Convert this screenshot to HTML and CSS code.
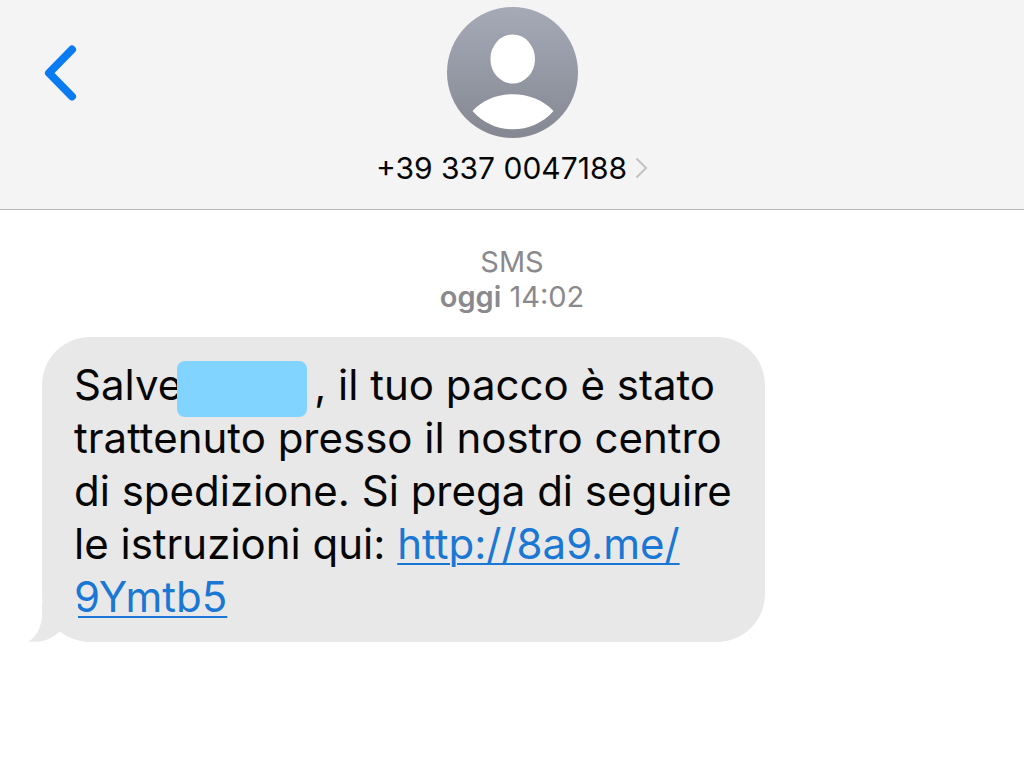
FILE: index.html
```html
<!DOCTYPE html>
<html lang="it">
<head>
<meta charset="utf-8">
<meta name="viewport" content="width=device-width, initial-scale=1">
<title>Messaggi</title>
<link rel="stylesheet" href="styles.css">
</head>
<body class="screen">
<header class="topbar">
  <button class="back" type="button" aria-label="Indietro">
    <svg class="back-icon" viewBox="0 0 34 58" aria-hidden="true"><path d="M28 5.500 5 29 28 52.500"/></svg>
  </button>
  <div class="contact">
    <svg class="avatar" viewBox="0 0 131 131" aria-hidden="true">
      <defs>
        <linearGradient id="shade" x1="0" y1="0" x2="0" y2="1">
          <stop offset="0" stop-color="#a5aab7"/>
          <stop offset="1" stop-color="#858892"/>
        </linearGradient>
      </defs>
      <circle cx="65.5" cy="65.5" r="65.5" fill="url(#shade)"/>
      <ellipse cx="65.7" cy="52" rx="22.3" ry="24.5" fill="#fff"/>
      <path d="M25.5 104C36 93 50 87.300 65.700 87.300S96 93 106.500 104C96 116 81 122.300 65.700 122.300S36 116 25.500 104Z" fill="#fff"/>
    </svg>
    <button class="number" type="button">
      <span>+39 337 0047188</span>
      <svg class="chevron" viewBox="0 0 13 22" aria-hidden="true"><path d="M2 2 11 11 2 20"/></svg>
    </button>
  </div>
</header>
<main class="thread">
  <p class="stamp">SMS<br><strong class="day">oggi</strong> <time datetime="14:02">14:02</time></p>
  <div class="bubble">
    <svg class="tail" viewBox="0 0 50 40" aria-hidden="true"><path d="M14 0V14C13 26 8 36 0 39.500C12 41 23 38 31 30L50 20V0Z"/></svg>
    <p class="message">Salve<span class="redacted"></span>, il tuo pacco è stato trattenuto presso il nostro centro di spedizione. Si prega di seguire le istruzioni qui: <a class="link" href="#">http://8a9.me/<wbr>9Ymtb5</a></p>
  </div>
</main>
</body>
</html>
```
FILE: styles.css
```css
* { box-sizing: border-box; }

.screen {
  margin: 0;
  background: #fff;
  color: #060606;
  font-family: Inter, "Liberation Sans", sans-serif;
}

.topbar {
  display: grid;
  grid-template-columns: 1fr auto 1fr;
  align-items: start;
  padding: 7px 44px 23px;
  background: #f4f4f4;
  border-bottom: 1px solid #b9b9bb;
}

.back {
  justify-self: start;
  margin-top: 37px;
  padding: 0;
  border: 0;
  background: none;
}

.back-icon {
  display: block;
  width: 34px;
  height: 58px;
  fill: none;
  stroke: #0b7bf2;
  stroke-width: 8;
  stroke-linecap: round;
  stroke-linejoin: round;
}

.contact {
  display: flex;
  flex-direction: column;
  align-items: center;
  gap: 12px;
}

.avatar {
  display: block;
  width: 131px;
  height: 131px;
}

.number {
  display: flex;
  align-items: center;
  gap: 8px;
  padding: 0;
  border: 0;
  background: none;
  color: inherit;
  font: inherit;
  font-size: 30px;
  line-height: 36px;
}

.chevron {
  width: 13px;
  height: 22px;
  fill: none;
  stroke: #c2c2c4;
  stroke-width: 2;
  stroke-linecap: round;
}

.thread {
  padding: 34px 42px;
}

.stamp {
  margin: 0 0 23px;
  color: #8a8a8e;
  font-size: 29px;
  line-height: 35px;
  text-align: center;
}

.day { font-weight: 600; }

.bubble {
  position: relative;
  width: fit-content;
  max-width: 723px;
  padding: 21px 32px 19px;
  border-radius: 48px;
  background: #e8e8e8;
}

.tail {
  position: absolute;
  left: -14px;
  bottom: 0;
  width: 50px;
  height: 40px;
  fill: #e8e8e8;
}

.message {
  margin: 0;
  font-size: 42px;
  line-height: 53px;
}

.redacted {
  display: inline-block;
  width: 130px;
  height: 56px;
  margin: -8px 7px -8px -5px;
  border-radius: 8px;
  background: #81d4ff;
  vertical-align: middle;
}

.link {
  color: #1a77d4;
  text-decoration-thickness: 2px;
  text-underline-offset: 4px;
}
```
